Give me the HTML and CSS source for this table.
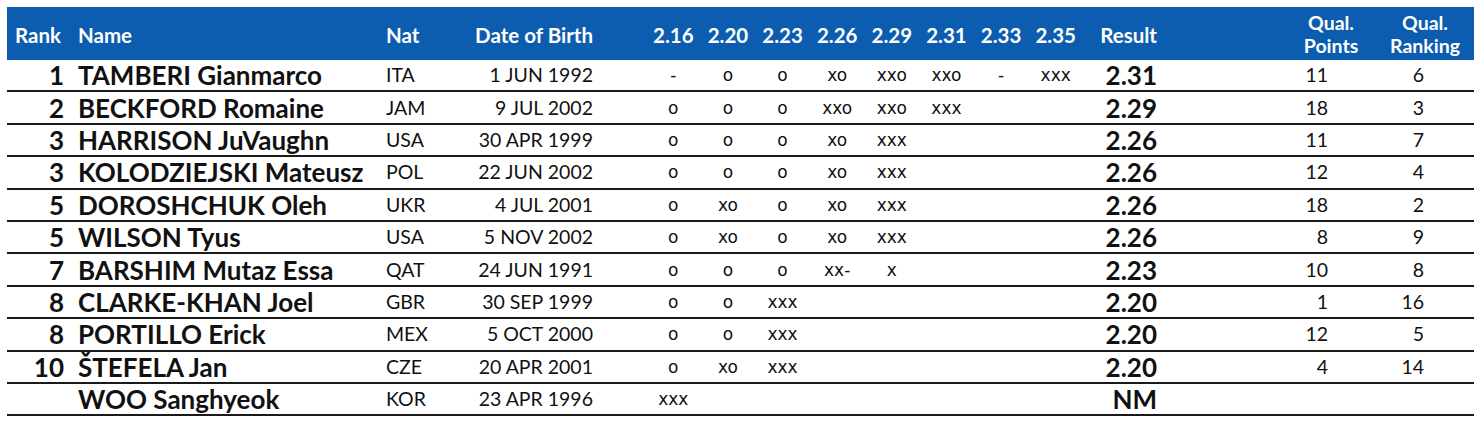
FILE: index.html
```html
<!DOCTYPE html>
<html>
<head>
<meta charset="utf-8">
<link rel="stylesheet" href="styles.css">
</head>
<body>
<div class="results">
  <div class="row head">
    <div class="c rank">Rank</div>
    <div class="c name">Name</div>
    <div class="c nat">Nat</div>
    <div class="c dob">Date of Birth</div>
    <div class="c h">2.16</div>
    <div class="c h">2.20</div>
    <div class="c h">2.23</div>
    <div class="c h">2.26</div>
    <div class="c h">2.29</div>
    <div class="c h">2.31</div>
    <div class="c h">2.33</div>
    <div class="c h">2.35</div>
    <div class="c res">Result</div>
    <div class="c qp"><div>Qual.</div><div>Points</div></div>
    <div class="c qr"><div>Qual.</div><div>Ranking</div></div>
  </div>

  <div class="row">
    <div class="c rank">1</div><div class="c name">TAMBERI Gianmarco</div><div class="c nat">ITA</div><div class="c dob">1 JUN 1992</div>
    <div class="c h">-</div><div class="c h">o</div><div class="c h">o</div><div class="c h">xo</div><div class="c h">xxo</div><div class="c h">xxo</div><div class="c h">-</div><div class="c h">xxx</div>
    <div class="c res">2.31</div><div class="c qp">11</div><div class="c qr">6</div>
  </div>
  <div class="row">
    <div class="c rank">2</div><div class="c name">BECKFORD Romaine</div><div class="c nat">JAM</div><div class="c dob">9 JUL 2002</div>
    <div class="c h">o</div><div class="c h">o</div><div class="c h">o</div><div class="c h">xxo</div><div class="c h">xxo</div><div class="c h">xxx</div><div class="c h"></div><div class="c h"></div>
    <div class="c res">2.29</div><div class="c qp">18</div><div class="c qr">3</div>
  </div>
  <div class="row">
    <div class="c rank">3</div><div class="c name">HARRISON JuVaughn</div><div class="c nat">USA</div><div class="c dob">30 APR 1999</div>
    <div class="c h">o</div><div class="c h">o</div><div class="c h">o</div><div class="c h">xo</div><div class="c h">xxx</div><div class="c h"></div><div class="c h"></div><div class="c h"></div>
    <div class="c res">2.26</div><div class="c qp">11</div><div class="c qr">7</div>
  </div>
  <div class="row">
    <div class="c rank">3</div><div class="c name">KOLODZIEJSKI Mateusz</div><div class="c nat">POL</div><div class="c dob">22 JUN 2002</div>
    <div class="c h">o</div><div class="c h">o</div><div class="c h">o</div><div class="c h">xo</div><div class="c h">xxx</div><div class="c h"></div><div class="c h"></div><div class="c h"></div>
    <div class="c res">2.26</div><div class="c qp">12</div><div class="c qr">4</div>
  </div>
  <div class="row">
    <div class="c rank">5</div><div class="c name">DOROSHCHUK Oleh</div><div class="c nat">UKR</div><div class="c dob">4 JUL 2001</div>
    <div class="c h">o</div><div class="c h">xo</div><div class="c h">o</div><div class="c h">xo</div><div class="c h">xxx</div><div class="c h"></div><div class="c h"></div><div class="c h"></div>
    <div class="c res">2.26</div><div class="c qp">18</div><div class="c qr">2</div>
  </div>
  <div class="row">
    <div class="c rank">5</div><div class="c name">WILSON Tyus</div><div class="c nat">USA</div><div class="c dob">5 NOV 2002</div>
    <div class="c h">o</div><div class="c h">xo</div><div class="c h">o</div><div class="c h">xo</div><div class="c h">xxx</div><div class="c h"></div><div class="c h"></div><div class="c h"></div>
    <div class="c res">2.26</div><div class="c qp">8</div><div class="c qr">9</div>
  </div>
  <div class="row">
    <div class="c rank">7</div><div class="c name">BARSHIM Mutaz Essa</div><div class="c nat">QAT</div><div class="c dob">24 JUN 1991</div>
    <div class="c h">o</div><div class="c h">o</div><div class="c h">o</div><div class="c h">xx-</div><div class="c h">x</div><div class="c h"></div><div class="c h"></div><div class="c h"></div>
    <div class="c res">2.23</div><div class="c qp">10</div><div class="c qr">8</div>
  </div>
  <div class="row">
    <div class="c rank">8</div><div class="c name">CLARKE-KHAN Joel</div><div class="c nat">GBR</div><div class="c dob">30 SEP 1999</div>
    <div class="c h">o</div><div class="c h">o</div><div class="c h">xxx</div><div class="c h"></div><div class="c h"></div><div class="c h"></div><div class="c h"></div><div class="c h"></div>
    <div class="c res">2.20</div><div class="c qp">1</div><div class="c qr">16</div>
  </div>
  <div class="row">
    <div class="c rank">8</div><div class="c name">PORTILLO Erick</div><div class="c nat">MEX</div><div class="c dob">5 OCT 2000</div>
    <div class="c h">o</div><div class="c h">o</div><div class="c h">xxx</div><div class="c h"></div><div class="c h"></div><div class="c h"></div><div class="c h"></div><div class="c h"></div>
    <div class="c res">2.20</div><div class="c qp">12</div><div class="c qr">5</div>
  </div>
  <div class="row">
    <div class="c rank">10</div><div class="c name">ŠTEFELA Jan</div><div class="c nat">CZE</div><div class="c dob">20 APR 2001</div>
    <div class="c h">o</div><div class="c h">xo</div><div class="c h">xxx</div><div class="c h"></div><div class="c h"></div><div class="c h"></div><div class="c h"></div><div class="c h"></div>
    <div class="c res">2.20</div><div class="c qp">4</div><div class="c qr">14</div>
  </div>
  <div class="row">
    <div class="c rank"></div><div class="c name">WOO Sanghyeok</div><div class="c nat">KOR</div><div class="c dob">23 APR 1996</div>
    <div class="c h">xxx</div><div class="c h"></div><div class="c h"></div><div class="c h"></div><div class="c h"></div><div class="c h"></div><div class="c h"></div><div class="c h"></div>
    <div class="c res">NM</div><div class="c qp"></div><div class="c qr"></div>
  </div>
</div>
</body>
</html>
```
FILE: styles.css
```css
html, body {
  margin: 0;
  padding: 0;
  background: #fff;
}
body {
  font-family: Lato, "Noto Sans", sans-serif;
  color: #111;
}
.results {
  padding: 7px 6px 0 7px;
  width: 1467px;
}
.row {
  display: grid;
  grid-template-columns: 65px 308px 60px 206px repeat(8, 54.625px) 207px 82px 102px;
  align-items: center;
  height: 32.4px;
  box-sizing: border-box;
  border-bottom: 2px solid #1a1a1a;
  line-height: 30px;
}
.row.head {
  height: 53px;
  border-bottom: none;
  background: #0c5daf;
  color: #fff;
  line-height: 24px;
  padding-top: 2px;
}
.c {
  white-space: nowrap;
}
.rank {
  text-align: right;
  padding-right: 8px;
  font-weight: 700;
  font-size: 26px;
}
.name {
  padding-left: 6px;
  font-weight: 700;
  font-size: 26px;
}
.nat {
  padding-left: 6px;
  font-size: 19.5px;
}
.dob {
  text-align: right;
  padding-right: 53px;
  font-size: 19.5px;
}
.h {
  text-align: center;
  font-family: "DejaVu Sans", Verdana, sans-serif;
  font-size: 17px;
}
.res {
  text-align: right;
  padding-right: 133px;
  font-weight: 700;
  font-size: 26px;
}
.qp {
  text-align: right;
  padding-right: 44px;
  font-size: 19.5px;
}
.qr {
  text-align: right;
  padding-right: 50px;
  font-size: 19.5px;
}
.head .c {
  font-family: Lato, "Noto Sans", sans-serif;
  font-size: 20.5px;
  font-weight: 700;
}
.head .qp,
.head .qr {
  font-size: 19.5px;
  line-height: 23px;
  text-align: center;
  padding-right: 0;
  padding-bottom: 2px;
}
.head .qr {
  padding-left: 4px;
}
.head .rank {
  text-align: left;
  padding-left: 8px;
  padding-right: 0;
}
```
